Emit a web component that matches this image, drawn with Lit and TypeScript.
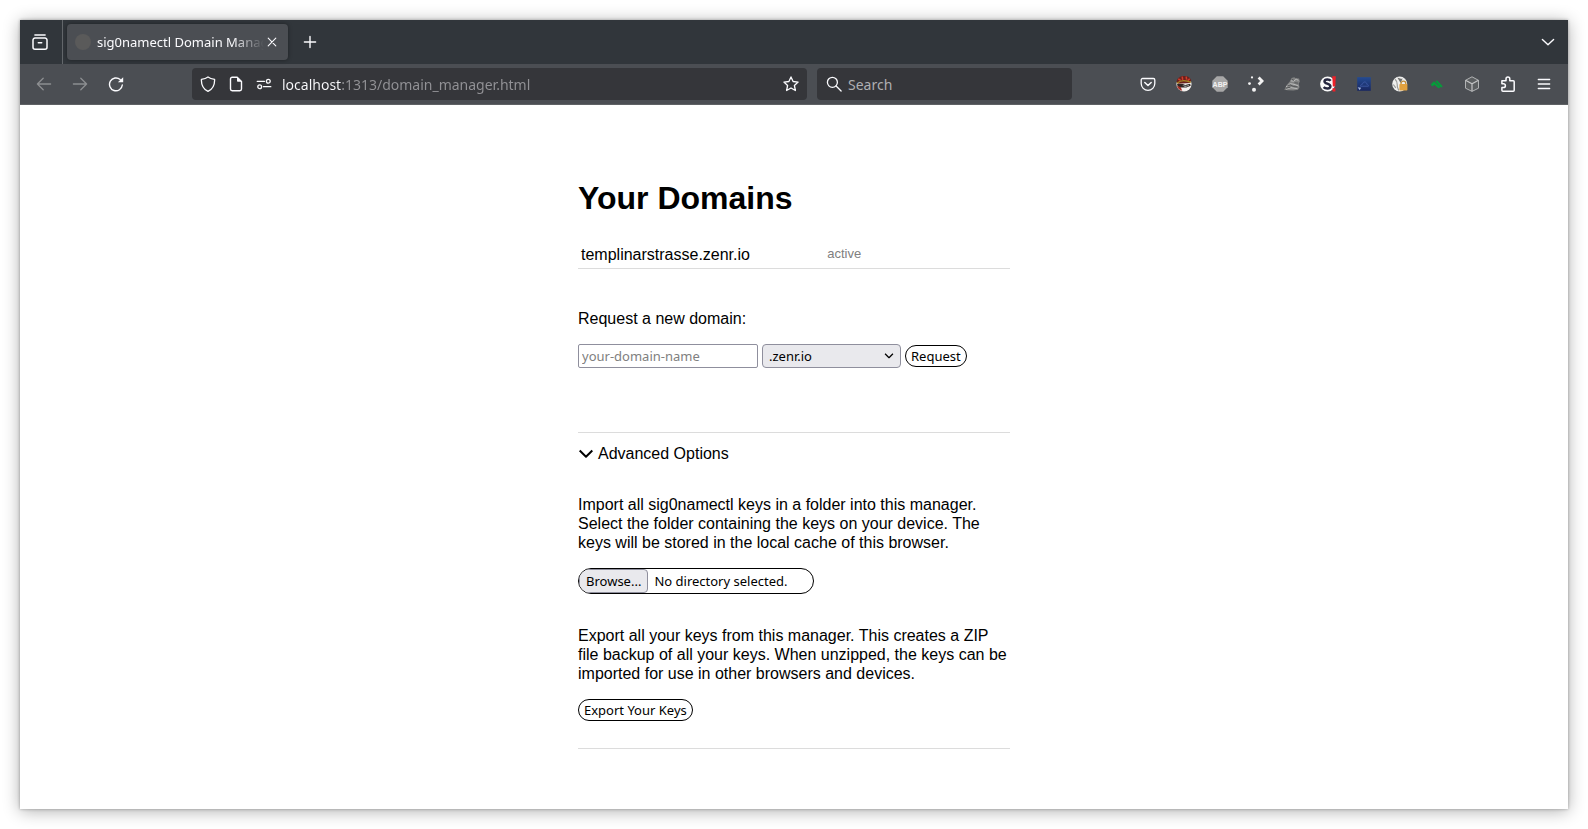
import { LitElement, html, svg, css, SVGTemplateResult } from "lit";
import { customElement, property, state } from "lit/decorators.js";

const line = (body: SVGTemplateResult) => svg`
  <g fill="none" stroke="currentColor" stroke-width="1.3" stroke-linecap="round" stroke-linejoin="round">${body}</g>`;

const ICONS: Record<string, SVGTemplateResult> = {
  archive: line(svg`<path stroke-width="1.5" d="M2.9.9h10.2M1 6.2a2 2 0 0 1 2-2.2h10a2 2 0 0 1 2 2.2v7a2 2 0 0 1-2 2H3a2 2 0 0 1-2-2zM6.3 8.7h3.4"/>`),
  close: line(svg`<path d="M4.2 4.2l7.6 7.6M11.8 4.2l-7.6 7.6" stroke-width="1.1"/>`),
  plus: line(svg`<path d="M8 2.4v11.2M2.4 8h11.2" stroke-width="1.4"/>`),
  chevron: line(svg`<path d="M2.4 5.4L8 10.7l5.6-5.3" stroke-width="1.4"/>`),
  back: line(svg`<path d="M14.6 8H1.4M7.2 2.2L1.4 8l5.8 5.8"/>`),
  forward: line(svg`<path d="M1.4 8h13.2M8.8 2.2L14.6 8l-5.8 5.8"/>`),
  reload: svg`
    <path d="M14.3 9A6.4 6.4 0 1 1 12.2 3.6" fill="none" stroke="currentColor" stroke-width="1.4" stroke-linecap="round"/>
    <path d="M15.2 1.2v5.1h-5.3z" fill="currentColor"/>`,
  shield: line(svg`<path d="M8 .9c1.6 1.2 3.9 2 6.6 2.5.2 5.1-1.7 9.5-6.600 12-4.900-2.500-6.800-6.900-6.600-12C4.100 2.900 6.400 2.100 8 .9z" />`),
  page: svg`
    <path d="M9.200 1.200H4.200A1.700 1.700 0 0 0 2.500 2.900v10.200a1.700 1.700 0 0 0 1.700 1.700h7.600a1.700 1.700 0 0 0 1.700-1.700V5.500z" fill="none" stroke="currentColor" stroke-width="1.400" stroke-linejoin="round"/>
    <path d="M9 1l4.700 4.700H9.800a.8.8 0 0 1-.8-.8z" fill="currentColor"/>`,
  permissions: line(svg`<path d="M1.200 5.300h7.300M7.500 10.700h7.300"/><circle cx="12.300" cy="5.200" r="1.900"/><circle cx="3.700" cy="10.800" r="1.900"/>`),
  star: line(svg`<path d="M8 .9l2.100 4.600 5 .6-3.700 3.400 1 5L8 12l-4.400 2.500 1-5L.9 6.100l5-.6z"/>`),
  search: line(svg`<circle cx="6.400" cy="6.300" r="5"/><path d="M10.100 10l5 5"/>`),
  pocket: line(svg`<path d="M2.600 2.500h10.800a1.400 1.400 0 0 1 1.400 1.400v3.700a6.800 6.800 0 0 1-13.600 0V3.900a1.400 1.400 0 0 1 1.400-1.400z"/><path stroke-width="1.500" d="M4.800 6.500L8 9.500l3.200-3"/>`),
  pirate: svg`
    <circle cx="8" cy="8" r="7.600" fill="#f4f1ee"/>
    <path d="M.5 6C1 1.800 4.500 0 8.500.1c3.200 0 5.700 1.500 6.800 4.200L13.800 7 2.300 7.800z" fill="#6b211c"/>
    <path d="M2.300 2.800l2.300 1.500M6.200.6l.5 3.200M10.200.6l.4 3M13.700 2.700l-2 1.900" stroke="#d23c2c" stroke-width="1.500"/>
    <path d="M1 7.200c4-3.400 8.300-3.300 13.800-.8" fill="none" stroke="#a58720" stroke-width="1.300"/>
    <path d="M1 8h5.900l2.300.9 4.900-1.200.6 2-4.300 1.800-5.700-.1-3-1z" fill="#302522"/>
    <path d="M6.200 9.300l4.200.4 3-1-.8 1.300-3.500 1z" fill="#9fa5a0"/>
    <path d="M1 9.900l3.600 1.200 1.700 3.700C3.600 14.200 1.600 12.500 1 9.900z" fill="#a52f26"/>`,
  block: svg`
    <path d="M4.800.3h6.400l4.500 4.500v6.400l-4.500 4.500H4.800L.3 11.200V4.800z" fill="#a7a7a7"/>
    <text x="8" y="10.600" text-anchor="middle" font-family="Liberation Sans, sans-serif" font-size="7" font-weight="700" fill="#f3f3f3">ABP</text>`,
  dots: svg`
    <g fill="#f3f3f3"><circle cx="4" cy="1.400" r="1.100"/><circle cx="1.500" cy="7.600" r="1.400"/><circle cx="6" cy="13.700" r="2"/></g>
    <path d="M10.600 1.500l3.500 3.500-3.500 3.500" fill="none" stroke="#f3f3f3" stroke-width="2.800"/>`,
  beast: svg`
    <path d="M.3 13.700l2.200-4.500L6 5.200 7.500 2l2.700-.8 1.500 1.100 3.300.1.900 3.200-1.200 2 .8 3.700-1.500 2.500-4.700.6-5.400-.2z" fill="#828383"/>
    <g fill="none" stroke="#c0c1c1" stroke-width=".9"><path d="M2 10.900l4.300-3.300 4.800 1 3.400 1.500M6.800 4.800l2.900.4 2.500-2 2.200 1.200M2 13.200l5-1.500 6.500 1"/></g>
    <g fill="none" stroke="#4d4f51" stroke-width=".9"><path d="M3.500 9.600l2.700-.6 3.600 1.600 3.700.2M7.800 3.300l2 1M10.500 6.800l3.500.3M1.800 12.300l4.600-1.100"/></g>`,
  script: svg`
    <circle cx="7.600" cy="8" r="7.500" fill="#fafafa"/>
    <path d="M10.700 4.700C9.300 2.900 4.700 2.900 4.500 5.300c-.2 2.700 6 2.100 5.900 5.200-.1 2.700-5 2.500-6.800.6" fill="none" stroke="#262740" stroke-width="2.500"/>
    <path d="M12.300.3h3.500l-.5 10.300h-2.500zM12.500 12.200h2.900v3.200h-2.900z" fill="#ed2028"/>`,
  cloud: svg`
    <defs><linearGradient id="night" x2="0" y2="1"><stop stop-color="#244b92"/><stop offset="1" stop-color="#192761"/></linearGradient></defs>
    <rect x="1.200" y="1.200" width="13.600" height="13.600" fill="url(#night)"/>
    <path d="M4.500 10.200c0-1.500.9-2 2-2 .2-1.500 1.300-2.500 2.500-2.200 1.200.2 1.700 1.200 1.700 2.200 1.200 0 1.900.8 1.700 2z" fill="none" stroke="#3d59a4" stroke-width=".9"/>
    <path d="M1.700 11.300l3.400.4-1.400 2.600z" fill="#a5b7df"/>`,
  privacy: svg`
    <circle cx="7.700" cy="8" r="7.500" fill="#efefee"/>
    <path d="M3 3.200C5 5 5.500 6 5.200 8.300s.4 4 1.600 6.200M1.300 8.500l2.500 3.300" fill="none" stroke="#9b9c9b" stroke-width="1.200"/>
    <path d="M5.300 1.600c2.500 1 2.800 1.500 5.400 1L8.600 7z" fill="#71726f"/>
    <path d="M9 9V7.600a2.400 2.400 0 0 1 4.800 0V9" fill="none" stroke="#c28c37" stroke-width="1.300"/>
    <rect x="7.400" y="8" width="8" height="6.500" rx=".7" fill="#e2a13e"/>`,
  leaves: svg`
    <path d="M2.700 8.600L6 5.300l6.600 6-2.200.9-3.900-3.500-2.200 1.700zM7.500 5.400L9.200 4.200l5.600 6.300-1.700 1z" fill="#069c3a"/>`,
  cube: svg`
    <path d="M8 .8l6.500 3.500v7.900L8 15.400l-6.500-3.200V4.300z" fill="#5c5f61" stroke="#b1b3b4"/>
    <path d="M1.500 4.300L8 7.700l6.500-3.400M8 7.700v7.500" fill="none" stroke="#c3c4c5" stroke-width="1.200"/>`,
  puzzle: line(svg`<path stroke-width="1.500" d="M2 4.700h4V3a1.900 1.900 0 0 1 3.800 0v1.700h3.400a1 1 0 0 1 1 1v8.500a1 1 0 0 1-1 1H2.900a1 1 0 0 1-1-1v-2.600h1.600a1.900 1.900 0 0 0 0-3.800H1.900V4.700z"/>`),
  menu: line(svg`<path d="M2.300 3.500h11.400M2.300 8h11.400M2.300 12.500h11.400" stroke-width="1.300"/>`),
  down: line(svg`<path d="M1.700 4.500L8 10.700l6.300-6.200" stroke-width="2" stroke-linecap="butt"/>`),
};

@customElement("ui-icon")
class UiIcon extends LitElement {
  @property() name = "";
  static styles = css`
    :host { display: block; width: 16px; height: 16px; flex: none; }
    svg { display: block; width: 100%; height: 100%; }
  `;
  render() {
    return html`<svg viewBox="0 0 16 16" aria-hidden="true">${ICONS[this.name]}</svg>`;
  }
}

const TOOLS = [
  ["pocket", "Save to Pocket"],
  ["pirate", "Identity tool"],
  ["block", "Ad blocker"],
  ["dots", "Redirect tool"],
  ["beast", "User scripts"],
  ["script", "Script blocker"],
  ["cloud", "Cloud tool"],
  ["privacy", "Privacy tool"],
  ["leaves", "Leaves tool"],
  ["cube", "Cube tool"],
  ["puzzle", "Extensions"],
  ["menu", "Open application menu"],
];

@customElement("browser-chrome")
class BrowserChrome extends LitElement {
  static styles = css`
    :host { display: block; font-family: "Noto Sans", sans-serif; color: #fbfbfe; }
    button { font: inherit; color: inherit; background: none; border: 0; padding: 0; margin: 0; }
    button:disabled { color: #8c8e91; }
    .tabs { display: flex; align-items: center; height: 44px; background: #31363b; }
    .view { box-sizing: border-box; width: 43px; height: 44px; display: grid; place-items: center; flex: none; padding-right: 2px; border-right: 1px solid #63676b; }
    .tab {
      display: flex; align-items: center; box-sizing: border-box; width: 221px; height: 36px;
      margin: 0 4px; padding: 0 8px; border-radius: 4px; background: #4b4e53;
      box-shadow: 0 0 4px rgba(0, 0, 0, 0.4);
    }
    .favicon { width: 16px; height: 16px; border-radius: 50%; background: #5a5a5a; margin-right: 6px; flex: none; }
    .title {
      flex: 1; min-width: 0; overflow: hidden; white-space: nowrap; font-size: 13px; line-height: 20px;
      -webkit-mask-image: linear-gradient(to left, transparent, #000 32px);
    }
    .new, .all { display: grid; place-items: center; width: 36px; height: 36px; flex: none; }
    .all { margin: 0 2px 0 auto; }
    .toolbar {
      display: flex; align-items: center; height: 40px; padding: 0 6px;
      background: #4b4e53; border-bottom: 1px solid #5f6265;
    }
    .tool { display: grid; place-items: center; width: 36px; height: 32px; flex: none; }
    .gap { flex: 0 1 58px; }
    .field { display: flex; align-items: center; height: 32px; border-radius: 4px; background: #35363a; }
    .url { flex: 1; min-width: 0; padding: 0 8px; }
    .mark { display: grid; place-items: center; width: 28px; height: 32px; flex: none; margin: 0; }
    .mark:first-child { width: 16px; margin-right: 6px; }
    .mark:last-child { width: 16px; }
    .search { flex: 0 1 255px; margin-left: 10px; padding: 0 9px; box-sizing: border-box; gap: 6px; }
    input {
      flex: 1; min-width: 0; width: 0; box-sizing: border-box; border: 0; padding: 2px 0 0; margin: 0; outline: 0;
      background: none; font: 14px/24px "Noto Sans", sans-serif; color: #fbfbfe;
    }
    .address {
      margin-left: 4px;
      color: transparent;
      background: linear-gradient(to right, #fbfbfe 60px, #929296 60px);
      -webkit-background-clip: text;
      background-clip: text;
    }
    .search input::placeholder { color: #afafb2; opacity: 1; }
  `;

  render() {
    return html`
      <div class="tabs">
        <button class="view" aria-label="View tabs"><ui-icon name="archive"></ui-icon></button>
        <div class="tab">
          <span class="favicon"></span>
          <span class="title">sig0namectl Domain Manager</span>
          <button aria-label="Close tab"><ui-icon name="close"></ui-icon></button>
        </div>
        <button class="new" aria-label="New tab"><ui-icon name="plus"></ui-icon></button>
        <button class="all" aria-label="List all tabs"><ui-icon name="chevron"></ui-icon></button>
      </div>
      <div class="toolbar">
        <button class="tool" disabled aria-label="Back"><ui-icon name="back"></ui-icon></button>
        <button class="tool" disabled aria-label="Forward"><ui-icon name="forward"></ui-icon></button>
        <button class="tool" aria-label="Reload"><ui-icon name="reload"></ui-icon></button>
        <span class="gap"></span>
        <div class="field url">
          <button class="mark" aria-label="Tracking protection"><ui-icon name="shield"></ui-icon></button>
          <button class="mark" aria-label="Page information"><ui-icon name="page"></ui-icon></button>
          <button class="mark" aria-label="Permissions"><ui-icon name="permissions"></ui-icon></button>
          <input class="address" aria-label="Address" .value=${"localhost:1313/domain_manager.html"} spellcheck="false" />
          <button class="mark" aria-label="Bookmark this page"><ui-icon name="star"></ui-icon></button>
        </div>
        <label class="field search">
          <ui-icon name="search"></ui-icon>
          <input aria-label="Search" placeholder="Search" />
        </label>
        <span class="gap"></span>
        ${TOOLS.map(([icon, label]) => html`
          <button class="tool" aria-label=${label}><ui-icon name=${icon}></ui-icon></button>`)}
      </div>
    `;
  }
}

@customElement("domain-manager")
class DomainManager extends LitElement {
  @state() private domains = [{ name: "templinarstrasse.zenr.io", status: "active" }];

  static styles = css`
    :host {
      display: block; box-sizing: border-box; width: 100%; max-width: 432px; margin: 0 auto; padding: 74px 0 60px;
      font: 16px/19px "Liberation Sans", Arial, sans-serif; color: #000;
    }
    h1 { margin: 0; font-size: 32px; line-height: 38px; }
    p { margin: 0; }
    table { width: 100%; margin-top: 25px; border-collapse: collapse; border-bottom: 1px solid #dcdcdc; }
    td { padding: 3px 3px 4px; text-align: left; vertical-align: top; }
    td:first-child { width: 57%; }
    .status { font-size: 13px; line-height: 17px; color: #808080; }
    .request { padding: 40px 0 64px; border-bottom: 1px solid #dcdcdc; }
    .request label { display: block; }
    .row { display: flex; align-items: center; gap: 4px; margin-top: 16px; }
    .row input, .row select, .pill, .file {
      box-sizing: border-box; margin: 0; font: 13px/18px "Noto Sans", sans-serif; color: #000;
    }
    .row input { width: 180px; height: 24px; padding: 1px 3px; border: 1px solid #8f8f9d; border-radius: 2px; background: #fff; }
    .row input::placeholder { color: #808080; opacity: 1; }
    .select { position: relative; }
    .row select {
      display: block; width: 139px; height: 24px; padding: 0 24px 0 6px; appearance: none;
      border: 1px solid #8f8f9d; border-radius: 4px; background: #e9e9ed;
    }
    .select ui-icon { position: absolute; right: 7px; top: 7px; width: 10px; height: 10px; pointer-events: none; }
    .pill { height: 22px; padding: 0 5px; border: 1px solid #000; border-radius: 11px; background: #fff; white-space: nowrap; }
    details { padding: 11px 0 27px; border-bottom: 1px solid #dcdcdc; }
    summary { display: flex; align-items: center; gap: 4px; list-style: none; }
    .import { margin-top: 32px; }
    .file {
      display: flex; width: 236px; height: 26px; margin-top: 16px; overflow: hidden;
      border: 1px solid #000; border-radius: 13px; line-height: 24px;
    }
    .file input { position: absolute; width: 1px; height: 1px; opacity: 0; }
    .browse { box-sizing: border-box; padding: 0 6px; line-height: 22px; border: 1px solid #8f8f9d; border-radius: 4px; background: #e9e9ed; }
    .chosen { padding-left: 6px; }
    .export { margin: 32px 0 16px; }
  `;

  render() {
    return html`
      <h1>Your Domains</h1>
      <table>
        <tbody>
          ${this.domains.map((d) => html`<tr><td>${d.name}</td><td class="status">${d.status}</td></tr>`)}
        </tbody>
      </table>
      <form class="request" @submit=${(e: Event) => e.preventDefault()}>
        <label for="name">Request a new domain:</label>
        <div class="row">
          <input id="name" placeholder="your-domain-name" />
          <div class="select">
            <select aria-label="Zone"><option>.zenr.io</option></select>
            <ui-icon name="down"></ui-icon>
          </div>
          <button class="pill">Request</button>
        </div>
      </form>
      <details open>
        <summary><ui-icon name="down"></ui-icon>Advanced Options</summary>
        <p class="import">Import all sig0namectl keys in a folder into this manager. Select the folder containing the keys on your device. The keys will be stored in the local cache of this browser.</p>
        <label class="file">
          <input type="file" webkitdirectory />
          <span class="browse">Browse...</span>
          <span class="chosen">No directory selected.</span>
        </label>
        <p class="export">Export all your keys from this manager. This creates a ZIP file backup of all your keys. When unzipped, the keys can be imported for use in other browsers and devices.</p>
        <button class="pill">Export Your Keys</button>
      </details>
    `;
  }
}

@customElement("app-root")
class AppRoot extends LitElement {
  static styles = css`
    :host { display: flex; box-sizing: border-box; min-height: 100vh; padding: 20px; background: #fff; }
    .window {
      flex: 1; min-width: 0; background: #fff;
      box-shadow: 0 0 3px rgba(0, 0, 0, 0.3), 0 2px 16px rgba(0, 0, 0, 0.32);
    }
  `;
  render() {
    return html`
      <div class="window">
        <browser-chrome></browser-chrome>
        <domain-manager></domain-manager>
      </div>
    `;
  }
}
